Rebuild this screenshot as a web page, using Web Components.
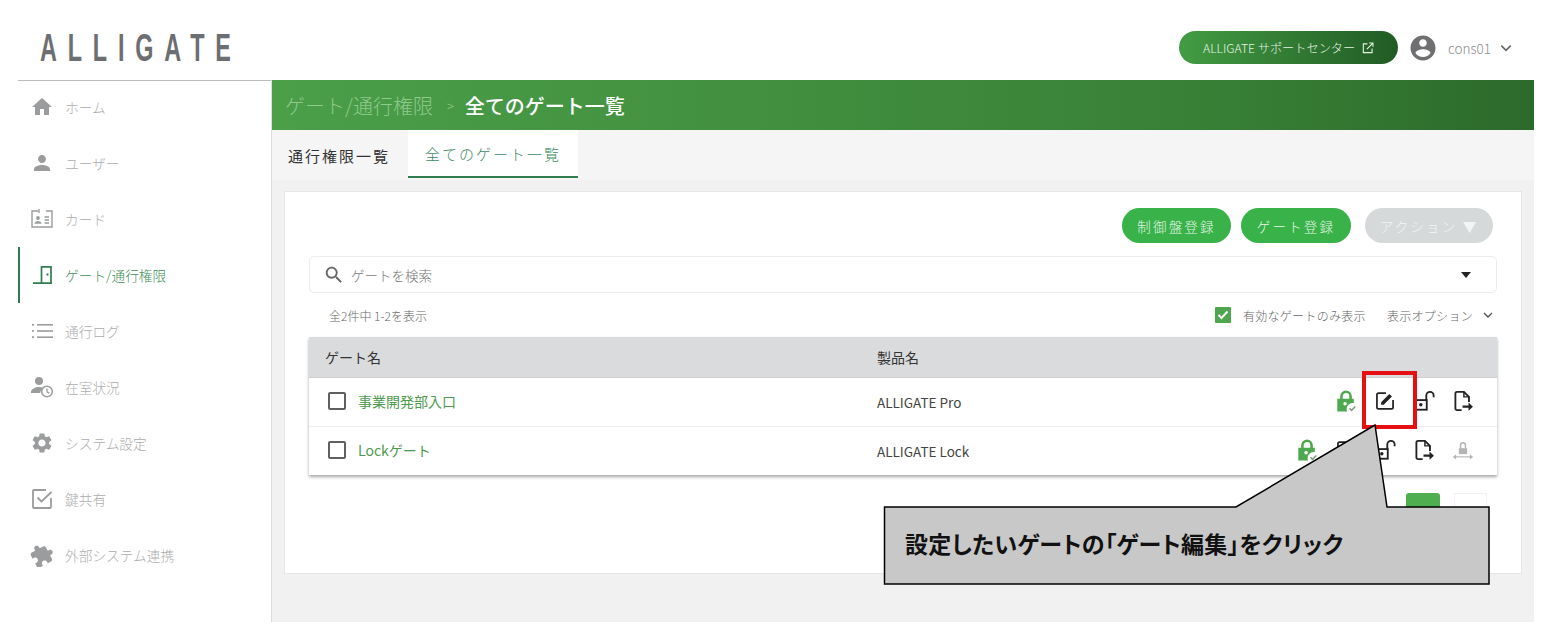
<!DOCTYPE html>
<html lang="ja"><head><meta charset="utf-8"><title>ALLIGATE</title>
<style>
html,body{margin:0;padding:0;background:#fff;height:637px;overflow:hidden;font-family:"Noto Sans CJK JP","Noto Sans",sans-serif;font-weight:300}
</style></head><body>
<app-shell>
  <app-header></app-header>
  <app-sidebar>
    <nav-item icon="home">ホーム</nav-item>
    <nav-item icon="person">ユーザー</nav-item>
    <nav-item icon="card">カード</nav-item>
    <nav-item icon="door" active>ゲート/通行権限</nav-item>
    <nav-item icon="list">通行ログ</nav-item>
    <nav-item icon="presence">在室状況</nav-item>
    <nav-item icon="gear">システム設定</nav-item>
    <nav-item icon="check">鍵共有</nav-item>
    <nav-item icon="puzzle">外部システム連携</nav-item>
  </app-sidebar>
  <gate-page></gate-page>
</app-shell>
<call-out>設定したいゲートの「ゲート編集」をクリック</call-out>
<script>
const P={
home:'<path fill="currentColor" d="M10 20v-6h4v6h5v-8h3L12 3 2 12h3v8z"/>',
person:'<path fill="currentColor" d="M12 12c2.21 0 4-1.79 4-4s-1.79-4-4-4-4 1.79-4 4 1.79 4 4 4zm0 2c-2.67 0-8 1.34-8 4v2h16v-2c0-2.66-5.33-4-8-4z"/>',
card:'<g fill="none" stroke="currentColor" stroke-width="1.4"><path d="M8 4H2v16h20V4h-6"/><path d="M9 2v4M14.5 10h4.5M14.5 13h4.5M14.5 16h4.5"/></g><circle cx="8" cy="11" r="1.9" fill="currentColor"/><path fill="currentColor" d="M4.5 16.8c0-2 2-2.8 3.5-2.8s3.5.8 3.5 2.8z"/>',
door:'<path fill="none" stroke="currentColor" stroke-width="1.7" d="M3 20.200h19M11.500 20.200V3.800h9.500V20.200"/><rect x="16.500" y="10.500" width="2" height="2" fill="currentColor"/>',
list:'<g fill="currentColor"><rect x="7" y="5" width="16" height="1.6"/><rect x="7" y="11.2" width="16" height="1.6"/><rect x="7" y="17.4" width="16" height="1.6"/><circle cx="3" cy="5.8" r="1.1"/><circle cx="3" cy="12" r="1.1"/><circle cx="3" cy="18.2" r="1.1"/></g>',
presence:'<circle cx="9" cy="6" r="4" fill="currentColor"/><path fill="currentColor" d="M1 18v-1c0-3 4.500-5 8-5 1.600 0 3.300.4 4.700 1-2 1-3.300 3-3.500 5z"/><circle cx="17" cy="16.500" r="5.300" fill="#fff" stroke="currentColor" stroke-width="1.500"/><path fill="none" stroke="currentColor" stroke-width="1.300" d="M17 13.500v3.300l2.300 1.300"/>',
gear:'<path fill="currentColor" d="M19.14 12.94c.04-.3.06-.61.06-.94 0-.32-.02-.64-.07-.94l2.03-1.58c.18-.14.23-.41.12-.61l-1.92-3.32c-.12-.22-.37-.29-.59-.22l-2.39.96c-.5-.38-1.03-.7-1.62-.94l-.36-2.54c-.04-.24-.24-.41-.48-.41h-3.84c-.24 0-.43.17-.47.41l-.36 2.54c-.59.24-1.13.57-1.62.94l-2.39-.96c-.22-.08-.47 0-.59.22L2.74 8.87c-.12.21-.08.47.12.61l2.03 1.58c-.05.3-.09.63-.09.94s.02.64.07.94l-2.03 1.58c-.18.14-.23.41-.12.61l1.92 3.32c.12.22.37.29.59.22l2.39-.96c.5.38 1.03.7 1.62.94l.36 2.54c.05.24.24.41.48.41h3.84c.24 0 .44-.17.47-.41l.36-2.54c.59-.24 1.13-.56 1.62-.94l2.39.96c.22.08.47 0 .59-.22l1.92-3.32c.12-.22.07-.47-.12-.61l-2.01-1.58zM12 15.6c-1.98 0-3.6-1.62-3.6-3.6s1.62-3.6 3.6-3.6 3.6 1.62 3.6 3.6-1.62 3.6-3.6 3.6z"/>',
check:'<path fill="none" stroke="currentColor" stroke-width="1.800" d="M21 11v9a1 1 0 0 1-1 1H4a1 1 0 0 1-1-1V4a1 1 0 0 1 1-1h12"/><path fill="none" stroke="currentColor" stroke-width="1.800" d="M7.500 10.500l4 4L21.500 5"/>',
puzzle:'<g transform="rotate(-28 12 12)"><path fill="currentColor" d="M20.5 11H19V7c0-1.100-.9-2-2-2h-4V3.500C13 2.120 11.880 1 10.500 1S8 2.120 8 3.500V5H4c-1.100 0-1.990.9-1.990 2v3.800H3.500c1.490 0 2.700 1.210 2.700 2.700s-1.210 2.700-2.700 2.700H2V20c0 1.100.9 2 2 2h3.800v-1.500c0-1.490 1.210-2.700 2.700-2.700 1.490 0 2.700 1.210 2.700 2.700V22H17c1.100 0 2-.9 2-2v-4h1.500c1.380 0 2.500-1.120 2.500-2.500S21.880 11 20.500 11z"/></g>',
avatar:'<path fill="currentColor" d="M12 2C6.480 2 2 6.480 2 12s4.480 10 10 10 10-4.480 10-10S17.520 2 12 2zm0 3c1.660 0 3 1.340 3 3s-1.340 3-3 3-3-1.340-3-3 1.340-3 3-3zm0 14.200c-2.500 0-4.710-1.280-6-3.220.03-1.990 4-3.080 6-3.080 1.990 0 5.970 1.090 6 3.080-1.290 1.940-3.500 3.220-6 3.220z"/>',
chev:'<path fill="none" stroke="currentColor" stroke-width="2.800" d="M4 8l8 8 8-8"/>',
ext:'<path fill="none" stroke="currentColor" stroke-width="1.900" d="M11 5H4v15h15v-7M10 14L20 4M14 3.500h6.500V10"/>',
search:'<path fill="currentColor" d="M15.500 14h-.79l-.28-.27C15.410 12.590 16 11.110 16 9.500 16 5.910 13.090 3 9.500 3S3 5.910 3 9.500 5.910 16 9.500 16c1.610 0 3.090-.59 4.230-1.570l.27.28v.79l5 4.990L20.490 19l-4.990-5zm-6 0C7.010 14 5 11.990 5 9.500S7.010 5 9.500 5 14 7.010 14 9.500 11.990 14 9.500 14z"/>',
lockok:'<path fill="none" stroke="currentColor" stroke-width="2.800" d="M7 10V7a5 5 0 0 1 10 0v3"/><path fill="currentColor" d="M2.500 9.500h18v4.700a6.800 6.800 0 0 0-7.300 9.300H2.500z"/><circle cx="11" cy="15" r="1.900" fill="#fff"/><path fill="none" stroke="#7d9c7d" stroke-width="1.600" d="M15.800 20l2.300 2.200 4-4.200"/>',
edit:'<path fill="none" stroke="currentColor" stroke-width="1.900" stroke-linejoin="round" d="M13 3.500H5a1.800 1.800 0 0 0-1.800 1.800v13.400A1.800 1.800 0 0 0 5 20.500h14a1.800 1.800 0 0 0 1.800-1.800V11"/><path fill="currentColor" d="M7.800 16.200v-2.800L16.800 4.400l2.800 2.800-9 9z"/>',
unlock:'<rect x="2" y="11" width="13" height="10.500" fill="none" stroke="currentColor" stroke-width="2"/><path fill="none" stroke="currentColor" stroke-width="2" d="M14.500 11V6a4 4 0 0 1 8 0v2"/><circle cx="8.500" cy="16.200" r="1.900" fill="currentColor"/>',
file:'<path fill="none" stroke="currentColor" stroke-width="2" stroke-linejoin="round" d="M10.500 22H5.500a1.800 1.800 0 0 1-1.800-1.800V3.800A1.800 1.800 0 0 1 5.500 2H13l5.500 5.500V13"/><path fill="none" stroke="currentColor" stroke-width="1.600" d="M13 2v5.500h5.500"/><path fill="currentColor" d="M11.500 17h6.500v-3.300l4.800 4.500-4.800 4.500v-3.300h-6.500z"/>',
locksync:'<path fill="currentColor" d="M7.500 10h9v6.500h-9z"/><path fill="none" stroke="currentColor" stroke-width="1.600" d="M9.300 10V6.800a2.700 2.700 0 0 1 5.400 0V10"/><path fill="none" stroke="currentColor" stroke-width="1.200" d="M2 19.500h20"/><path fill="currentColor" d="M1 19.500l3.500-2.800v5.600zM23 19.500l-3.500-2.800v5.600z"/>'
};
const svg=(n,s,extra='')=>`<svg xmlns="http://www.w3.org/2000/svg" viewBox="0 0 24 24" width="${s}" height="${s}" style="display:block;flex:none;${extra}">${P[n]}</svg>`;
class Base extends HTMLElement{
  constructor(){super();this.attachShadow({mode:'open'}).innerHTML=this.markup();}
  markup(){return ''}
}
customElements.define('app-shell',class extends Base{markup(){return `<style>
:host{display:grid;grid-template-columns:253px 1fr;grid-template-rows:80px 542px;margin:0 14px 0 18px;width:1516px;font-size:14px}
::slotted(app-header){grid-column:1/3}
</style><slot></slot>`}});
customElements.define('app-header',class extends Base{markup(){return `<style>
:host{display:flex;align-items:flex-start;justify-content:space-between;height:80px;box-sizing:border-box}
.logo{font-family:"Liberation Sans",sans-serif;font-weight:700;font-size:39px;line-height:39px;color:#6d6e72;letter-spacing:18px;margin:28px 0 0 22px;transform:scaleX(.6);transform-origin:0 0;white-space:nowrap}
.right{display:flex;align-items:center;margin:31px 21px 0 0;color:#8c8c8c}
.sup{display:flex;align-items:center;box-sizing:border-box;width:219px;height:33px;padding-left:24px;border-radius:17px;background:linear-gradient(90deg,#439c43,#215b25);color:#e4f2e2;font-size:12.200px;white-space:nowrap;gap:6px}
.av{margin-left:10px;color:#6f6f72}
.nm{margin-left:10px;font-size:13.500px;width:42px}
.ch{margin-left:9px;color:#666}
</style><div class="logo">ALLIGATE</div><div class="right"><div class="sup">ALLIGATE サポートセンター ${svg('ext',14)}</div><span class="av">${svg('avatar',30)}</span><span class="nm">cons01</span><span class="ch">${svg('chev',14)}</span></div>`}});
customElements.define('app-sidebar',class extends Base{markup(){return `<style>
:host{display:flex;flex-direction:column;border-top:1px solid #bcbcbc;background:#fff;box-sizing:border-box}
::slotted(nav-item:first-child){margin-top:-2px}
</style><slot></slot>`}});
customElements.define('nav-item',class extends Base{
  markup(){const a=this.hasAttribute('active');return `<style>
:host{display:flex;align-items:center;height:56px;box-sizing:border-box;padding-left:${a?10:12}px;gap:11px;font-size:13.700px;color:${a?'#3f8f58':'#adadad'};white-space:nowrap;${a?'border-left:2px solid #2f7d4f;':''}}
.i{color:${a?'#2f7d4f':'#9b9c9d'}}
</style><span class="i">${svg(this.getAttribute('icon'),24)}</span><slot></slot>`}
});
customElements.define('gate-page',class extends Base{markup(){return `<style>
:host{display:flex;flex-direction:column;background:#f1f1f1;border-left:1px solid #dcdcdc;height:542px;box-sizing:border-box;min-width:0}
.bar{height:50px;background:linear-gradient(90deg,#4b9f49 0%,#418f3f 40%,#387f36 75%,#2c6a2b 100%);display:flex;align-items:center;padding-left:13px;font-size:20px;color:#8fc98c;white-space:nowrap;flex:none}
.bar .sep{font-size:13px;margin:0 11px 0 14px}
.bar b{color:#fff;font-weight:500}
.tabs{height:50px;background:#f5f5f5;display:flex;align-items:stretch;padding-left:16px;font-size:15px;letter-spacing:2px;color:#333;flex:none;font-weight:400}
.tabs span{display:flex;align-items:center;box-sizing:border-box}
.tabs .t1{width:120px}
.tabs .on{width:170px;justify-content:center;background:#fff;color:#3d8a63;border-bottom:2px solid #2f7d4f;font-weight:300;height:48px}
gate-card{margin:11px 12px 0 12px}
</style><div class="bar"><span>ゲート/通行権限</span><span class="sep">&gt;</span><b>全てのゲート一覧</b></div><div class="tabs"><span class="t1">通行権限一覧</span><span class="on">全てのゲート一覧</span></div><gate-card></gate-card>`}});
customElements.define('pill-button',class extends Base{markup(){const g=this.hasAttribute('off');return `<style>
:host{display:inline-flex;align-items:center;justify-content:center;height:35px;border-radius:18px;background:${g?'#d6d9da':'#38b249'};color:${g?'#f3f4f4':'#e9f7ea'};font-size:13.500px;letter-spacing:2.200px;white-space:nowrap;box-sizing:border-box}
</style><slot></slot>`}});
customElements.define('gate-row',class extends Base{markup(){const n=this.getAttribute('name'),p=this.getAttribute('product'),l=this.hasAttribute('lock');return `<style>
:host{display:grid;grid-template-columns:568px 1fr auto;align-items:center;height:48px;border-bottom:1px solid #ececec;box-sizing:content-box;background:#fff}
.n{display:flex;align-items:center;padding-left:19px;color:#4d9a4f;font-size:14px;font-weight:400;padding-bottom:2px}
.cb{width:18px;height:18px;box-sizing:border-box;border:2px solid #606060;border-radius:2px;margin-right:12px;flex:none}
.p{color:#444;font-size:13.500px;font-weight:400;padding-bottom:1px}
.a{display:flex;align-items:center;gap:17px;padding-right:23px;color:#222;padding-bottom:2px}
.g{color:#4fa84f}.m{color:#b5b5b5}
</style><div class="n"><span class="cb"></span><slot></slot>${n}</div><div class="p">${p}</div><div class="a"><span class="g">${svg('lockok',22)}</span>${svg('edit',22)}${svg('unlock',22)}${svg('file',22)}${l?`<span class="m">${svg('locksync',22)}</span>`:''}</div>`}});
customElements.define('gate-card',class extends Base{markup(){return `<style>
:host{display:flex;flex-direction:column;height:383px;background:#fff;box-sizing:border-box;padding:16px 24px 0;border:1px solid #e6e6e6;flex:none}
.btns{display:flex;justify-content:flex-end;margin-right:4px;flex:none}
.btns pill-button{width:109px;margin-left:10px}
.btns pill-button.b{width:110px}
.btns pill-button.a{width:128px;margin-left:14px}
.search{display:flex;align-items:center;height:37px;margin-top:13px;border:1px solid #ececec;border-radius:5px;box-sizing:border-box;padding:0 13px;color:#777;font-size:13.500px;flex:none;gap:6px}
.search .tri{margin-left:auto;margin-right:12px;width:0;height:0;border:5px solid transparent;border-top:6px solid #222;border-bottom:0}
.search i{color:#666}
.info{display:flex;align-items:center;height:44px;padding:0 3px 0 20px;font-size:12px;color:#666;flex:none}
.r{margin-left:auto;display:flex;align-items:center;letter-spacing:.3px}
.ok{width:16px;height:16px;background:#4ea64e;color:#fff;margin-right:12px;display:flex;align-items:center;justify-content:center;border-radius:1px}
.opt{margin-left:21px}
.th{display:grid;grid-template-columns:552px 1fr;align-items:center;height:41px;background:#d9dbdc;padding-left:16px;color:#333;font-size:14px;font-weight:400;flex:none;border-bottom:1px solid #cfcfcf;box-sizing:border-box}
.tbl{box-shadow:0 2px 3px rgba(0,0,0,.35);flex:none}
gate-row:last-child{border-bottom:0}
.pg{display:flex;justify-content:flex-end;gap:14px;margin-top:18px;padding-right:10px}
.pg b{width:34px;height:34px;border-radius:3px;background:#4fae4f;color:#fff;display:flex;align-items:center;justify-content:center;font-weight:400;font-size:12px}
.pg u{width:33px;height:34px;text-decoration:none;color:#888;border:1px solid #f1f1f1;box-sizing:border-box;display:flex;align-items:center;justify-content:center;font-size:12px}
</style><div class="btns"><pill-button>制御盤登録</pill-button><pill-button class="b">ゲート登録</pill-button><pill-button class="a" off>アクション ▼</pill-button></div>
<div class="search"><i>${svg('search',22)}</i>ゲートを検索<span class="tri"></span></div>
<div class="info"><span>全2件中 1-2を表示</span><div class="r"><span class="ok"><svg width="12" height="12" viewBox="0 0 12 12"><path fill="none" stroke="#fff" stroke-width="2" d="M1.500 6l3 3 6-6.500"/></svg></span><span>有効なゲートのみ表示</span><span class="opt">表示オプション</span><span style="margin-left:9px;color:#555">${svg('chev',12)}</span></div></div>
<div class="tbl"><div class="th"><span>ゲート名</span><span>製品名</span></div><gate-row name="事業開発部入口" product="ALLIGATE Pro"></gate-row><gate-row name="Lockゲート" product="ALLIGATE Lock" lock></gate-row></div>
<div class="pg"><b>1</b><u>›</u></div>`}});
customElements.define('call-out',class extends Base{markup(){return `<style>
:host{position:absolute;left:0;top:0;width:1548px;height:637px;pointer-events:none;display:block}
svg{position:absolute;left:0;top:0}
.hl{position:absolute;left:1362px;top:371px;width:55px;height:58px;box-sizing:border-box;border:4px solid #e60f14}
.t{position:absolute;left:905px;top:526px;font-size:23px;line-height:34px;letter-spacing:.3px;font-weight:700;color:#111;white-space:nowrap;font-feature-settings:"palt"}
</style><div class="hl"></div><svg width="1548" height="637"><polygon points="884.500,507 1236,507 1375,425 1387,507 1489,507 1489,584 884.500,584" fill="#c8c8c8" stroke="#000" stroke-width="1.500"/></svg><span class="t"><slot></slot></span>`}});
</script>
</body></html>
